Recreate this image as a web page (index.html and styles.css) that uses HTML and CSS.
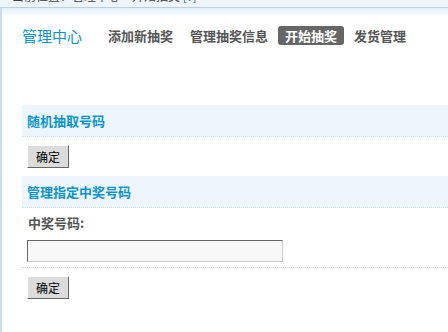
FILE: index.html
```html
<!DOCTYPE html>
<html lang="zh-CN">
  <head>
    <meta charset="UTF-8" />
    <title>开始抽奖</title>
    <link rel="stylesheet" href="styles.css">
  </head>
  <body>
    <div class="topbar">
      <div class="topbar-text">当前位置：管理中心 &gt; 开始抽奖 <span class="blue">[?]</span></div>
    </div>

    <div class="main">
      <div class="nav">
        <span class="nav-title">管理中心</span>
        <a class="nav-item" href="#">添加新抽奖</a>
        <a class="nav-item" href="#">管理抽奖信息</a>
        <a class="nav-item active" href="#">开始抽奖</a>
        <a class="nav-item" href="#">发货管理</a>
      </div>

      <div class="section">
        <h3 class="section-title">随机抽取号码</h3>
        <div class="section-body">
          <button class="btn">确定</button>
        </div>
      </div>

      <div class="section">
        <h3 class="section-title">管理指定中奖号码</h3>
        <div class="field">
          <label class="field-label" for="num">中奖号码:</label>
          <input class="field-input" type="text" id="num" />
        </div>
        <div class="section-body">
          <button class="btn">确定</button>
        </div>
      </div>
    </div>
  </body>
</html>
```

FILE: styles.css
```css
body {
  margin: 0;
  padding: 0;
  background: #fff;
  font-family: "Noto Sans CJK SC", "Liberation Sans", sans-serif;
  font-size: 12px;
  color: #333;
  overflow: hidden;
}
.topbar {
  height: 7px;
  overflow: hidden;
  background: #eef6fb;
  border-bottom: 1px solid #b7d3e1;
}
.topbar-text {
  margin-top: -11px;
  padding-left: 12px;
  font-size: 12px;
  line-height: 14px;
  color: #444;
}
.topbar-text .blue {
  color: #2f6fd0;
}
.main {
  border-left: 2px solid #c6deec;
  min-height: 330px;
  background: linear-gradient(#e3f0f8, #fff 9px);
}
.nav {
  display: flex;
  align-items: center;
  padding: 18px 0 0 20px;
}
.nav-title {
  font-size: 15px;
  color: #0a95c9;
  margin-right: 19px;
  line-height: 19px;
}
.nav-item {
  font-size: 13px;
  font-weight: bold;
  color: #555;
  text-decoration: none;
  padding: 0 7px;
  margin-right: 3px;
  line-height: 19px;
  border-radius: 3px;
}
.nav-item.active {
  background: #666;
  color: #fff;
}
.section {
  margin-left: 20px;
}
.nav + .section {
  margin-top: 60px;
}
.section-title {
  margin: 0;
  height: 31px;
  line-height: 31px;
  padding-left: 5px;
  background: #eef5fc;
  border-bottom: 1px dotted #cfe2ee;
  font-size: 13px;
  font-weight: bold;
  color: #0a95c9;
}
.section-body {
  padding: 8px 5px 8px 5px;
}
.btn {
  width: 42px;
  height: 23px;
  padding: 0;
  background: #dcdcdc;
  border: 1px solid;
  border-color: #fff #666 #666 #fff;
  font-family: "Noto Sans CJK SC", sans-serif;
  font-size: 12px;
  color: #000;
  display: block;
}
.field {
  padding: 6px 5px 5px 5px;
  border-bottom: 1px dotted #dcdcdc;
}
.field-label {
  display: block;
  font-size: 13px;
  font-weight: bold;
  color: #555;
  line-height: 18px;
  padding-left: 1px;
  margin-bottom: 8px;
}
.field-input {
  display: block;
  width: 252px;
  height: 18px;
  padding: 1px;
  margin: 0;
  background: #f8f8f8;
  border: 1px solid;
  border-color: #666 #ccc #ccc #666;
}
```
